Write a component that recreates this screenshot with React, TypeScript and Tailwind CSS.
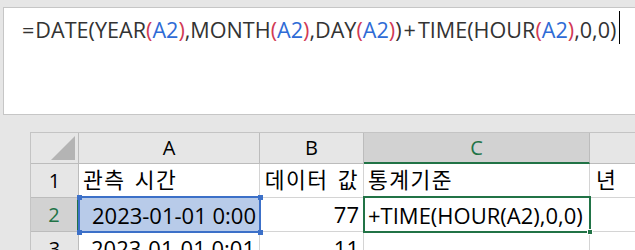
const FONT = '"Open Sans", "Noto Sans CJK KR", sans-serif';

function Ref({ children }: { children: string }) {
  return (
    <>
      <span className="text-[#d23a55]">(</span>
      <span className="text-[#2e6bd6]">{children}</span>
      <span className="text-[#d23a55]">)</span>
    </>
  );
}

function Handle({ className }: { className: string }) {
  return <span className={`absolute w-[5px] h-[5px] bg-[#3c70c8] ${className}`} />;
}

// hangul in the cells runs a bit wider than Noto's default advance
function Ko({ children }: { children: string }) {
  return <span className="text-[21.5px] tracking-[1.5px] [word-spacing:2px]">{children}</span>;
}

export default function App() {
  return (
    <div className="w-[635px] h-[250px] bg-[#e6e6e6] overflow-hidden" style={{ fontFamily: FONT }}>
      {/* formula bar */}
      <div className="pt-[7px] pl-[3px]">
        <div className="relative h-[108px] bg-white border-t border-b border-l border-[#c6c6c6] pl-[18px] pt-[7px] text-[21.6px] leading-[30px] text-[#333] whitespace-nowrap">
          <span className="mr-[1px]">=</span>DATE(YEAR<Ref>A2</Ref>,MONTH<Ref>A2</Ref>,DAY<Ref>A2</Ref>)
          <span className="mx-[2px]">+</span>TIME(HOUR<Ref>A2</Ref>,0,0)
          <span className="absolute left-[615px] top-[3px] w-px h-[33px] bg-black" />
        </div>
      </div>

      {/* sheet */}
      <div className="mt-[17px] ml-[30px] border-l border-t border-[#c4c4c4] grid grid-cols-[48px_181px_104px_226px_1fr] text-[22px] text-black">
        {/* column headers */}
        <div className="relative h-[31px] bg-[#e6e6e6] border-r border-b border-[#bcbcbc]">
          <div className="absolute right-[3px] bottom-[3px] w-0 h-0 border-l-[24px] border-l-transparent border-b-[24px] border-b-[#b4b4b4]" />
        </div>
        <div className="h-[31px] bg-[#e6e6e6] border-r border-b border-[#bcbcbc] flex items-center justify-center text-[20px]">A</div>
        <div className="h-[31px] bg-[#e6e6e6] border-r border-b border-[#bcbcbc] flex items-center justify-center text-[20px]">B</div>
        <div className="h-[31px] bg-[#d2d2d2] border-r border-[#bcbcbc] border-b-2 border-b-[#217346] flex items-center justify-center text-[20px] text-[#217346]">C</div>
        <div className="h-[31px] bg-[#e6e6e6] border-b border-[#bcbcbc]" />

        {/* row 1 */}
        <div className="h-[34px] bg-[#e6e6e6] border-r border-b border-[#bcbcbc] flex items-center justify-center text-[20px]">1</div>
        <div className="h-[34px] bg-white border-r border-b border-[#d4d4d4] flex items-center pl-[4px]"><Ko>관측 시간</Ko></div>
        <div className="h-[34px] bg-white border-r border-b border-[#d4d4d4] flex items-center justify-end pr-[4px]"><Ko>데이터 값</Ko></div>
        <div className="h-[34px] bg-white border-r border-b border-[#d4d4d4] flex items-center pl-[4px]"><Ko>통계기준</Ko></div>
        <div className="h-[34px] bg-white border-b border-[#d4d4d4] flex items-center pl-[6px]"><Ko>년</Ko></div>

        {/* row 2 */}
        <div className="h-[34px] bg-[#d2d2d2] border-b border-[#bcbcbc] border-r-2 border-r-[#217346] flex items-center justify-center text-[20px] text-[#217346]">2</div>
        <div className="relative h-[34px] bg-[#b8cbe9] flex items-center justify-end pr-[4px]">
          <div className="absolute -left-px -top-[2px] -right-px -bottom-px border-2 border-[#3c70c8]" />
          <Handle className="-left-[2px] -top-[3px]" />
          <Handle className="-right-[3px] -top-[3px]" />
          <Handle className="-left-[2px] -bottom-[3px]" />
          <Handle className="-right-[3px] -bottom-[3px]" />
          <span className="relative">2023-01-01 0:00</span>
        </div>
        <div className="h-[34px] bg-white border-r border-b border-[#d4d4d4] flex items-center justify-end pr-[4px]">77</div>
        <div className="relative h-[34px] bg-white flex items-center pl-[4px]">
          <div className="absolute -left-px -top-[2px] -right-px -bottom-px border-2 border-[#217346]" />
          <span className="absolute -right-[3px] -bottom-[3px] w-[6px] h-[6px] bg-[#217346] border border-white" />
          <span className="relative">+TIME(HOUR(A2),0,0)</span>
        </div>
        <div className="h-[34px] bg-white border-b border-[#d4d4d4]" />

        {/* row 3 */}
        <div className="h-[34px] bg-[#e6e6e6] border-r border-b border-[#bcbcbc] flex items-center justify-center text-[20px]">3</div>
        <div className="h-[34px] bg-white border-r border-b border-[#d4d4d4] flex items-center justify-end pr-[4px]">2023-01-01 0:01</div>
        <div className="h-[34px] bg-white border-r border-b border-[#d4d4d4] flex items-center justify-end pr-[4px]">11</div>
        <div className="h-[34px] bg-white border-r border-b border-[#d4d4d4]" />
        <div className="h-[34px] bg-white border-b border-[#d4d4d4]" />
      </div>
    </div>
  );
}
